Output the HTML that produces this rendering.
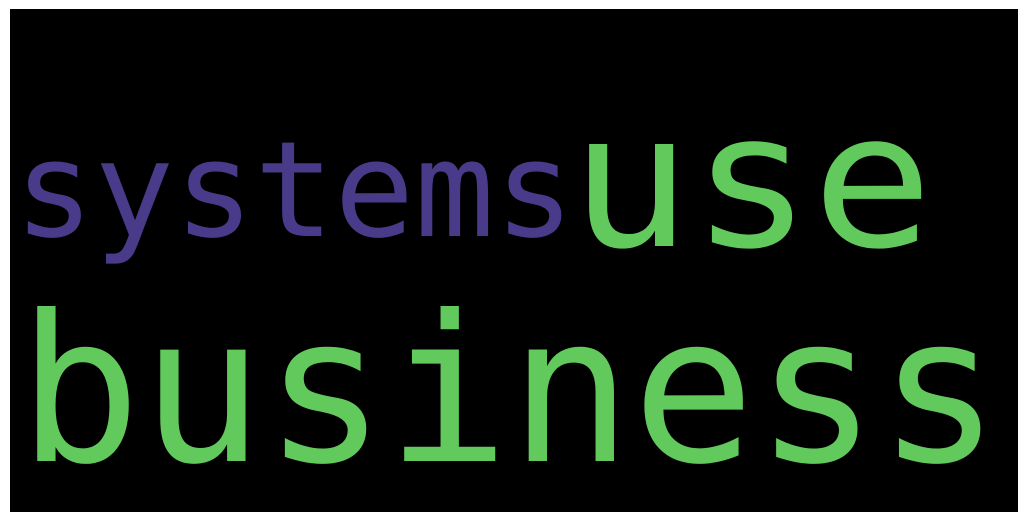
<!DOCTYPE html>
<html><head><style>html,body{margin:0;padding:0;background:#fff;width:1027px;height:523px;overflow:hidden}</style></head>
<body>
<svg width="1027" height="523" xmlns="http://www.w3.org/2000/svg">
<rect x="10" y="9" width="1008" height="503" fill="#000"/>
<text x="14" y="236" font-family="DejaVu Sans Mono, monospace" font-size="133" fill="#4a3a8a">systems</text>
<text x="570" y="246" font-family="DejaVu Sans Mono, monospace" font-size="201" fill="#62c95c" transform="translate(0,246) scale(1,0.93) translate(0,-246)">use</text>
<text x="18" y="461" font-family="DejaVu Sans Mono, monospace" font-size="204" fill="#62c95c">business</text>
</svg>
</body></html>
